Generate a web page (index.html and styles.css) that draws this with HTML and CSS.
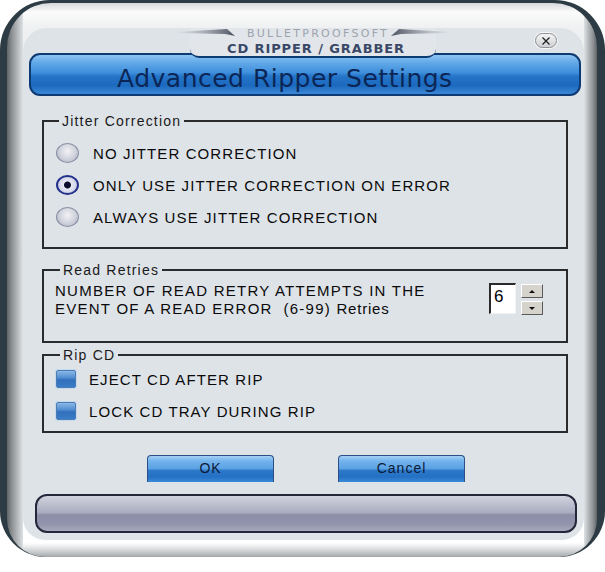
FILE: index.html
```html
<!DOCTYPE html>
<html>
<head>
<meta charset="utf-8">
<link rel="stylesheet" href="styles.css">
</head>
<body>
<div class="frame">
  <div class="chrome">
    <div class="panel">
      <div class="tab">
        <svg class="bevel" width="276" height="14" viewBox="0 0 276 14">
          <defs>
            <linearGradient id="wl" x1="0" x2="1" y1="0" y2="0">
              <stop offset="0" stop-color="#8a909c" stop-opacity="0"/>
              <stop offset="1" stop-color="#4a505e"/>
            </linearGradient>
            <linearGradient id="wr" x1="1" x2="0" y1="0" y2="0">
              <stop offset="0" stop-color="#8a909c" stop-opacity="0"/>
              <stop offset="1" stop-color="#4a505e"/>
            </linearGradient>
          </defs>
          <polygon points="0,6 52,3 60,10 50,8 0,7" fill="url(#wl)"/>
          <polygon points="276,6 224,3 216,10 226,8 276,7" fill="url(#wr)"/>
        </svg>
        <div class="brand">BULLETPROOFSOFT</div>
        <div class="product">CD RIPPER / GRABBER</div>
      </div>
      <div class="close">
        <svg width="10" height="10" viewBox="0 0 10 10"><path d="M1.5 1.5 L8.5 8.5 M8.5 1.5 L1.5 8.5" stroke="#222" stroke-width="1.3" fill="none"/></svg>
      </div>
      <div class="titlebar"><h1 class="title">Advanced Ripper Settings</h1></div>

      <fieldset class="group jitter">
        <legend class="legend">Jitter Correction</legend>
        <div class="row"><span class="radio"></span><span class="label">NO JITTER CORRECTION</span></div>
        <div class="row"><span class="radio on"></span><span class="label">ONLY USE JITTER CORRECTION ON ERROR</span></div>
        <div class="row"><span class="radio"></span><span class="label">ALWAYS USE JITTER CORRECTION</span></div>
      </fieldset>

      <fieldset class="group retries">
        <legend class="legend">Read Retries</legend>
        <div class="retry-row">
          <div class="retry-text label">NUMBER OF READ RETRY ATTEMPTS IN THE<br>EVENT OF A READ ERROR &nbsp;(6-99) <span class="mixed">Retries</span></div>
          <div class="spin">
            <div class="spin-input">6</div>
            <div class="spin-btns">
              <div class="spin-btn"><span class="tri up"></span></div>
              <div class="spin-btn"><span class="tri down"></span></div>
            </div>
          </div>
        </div>
      </fieldset>

      <fieldset class="group ripcd">
        <legend class="legend">Rip CD</legend>
        <div class="row chk"><span class="check"></span><span class="label">EJECT CD AFTER RIP</span></div>
        <div class="row chk"><span class="check"></span><span class="label">LOCK CD TRAY DURING RIP</span></div>
      </fieldset>

      <div class="actions">
        <div class="btn">OK</div>
        <div class="btn">Cancel</div>
      </div>

      <div class="statusbar"></div>
    </div>
  </div>
</div>
</body>
</html>
```

FILE: styles.css
```css
html, body {
  margin: 0;
  padding: 0;
  background: #ffffff;
}
body {
  width: 605px;
  height: 572px;
  overflow: hidden;
  font-family: "Liberation Sans", Arial, sans-serif;
  color: #111;
}
.frame {
  width: 605px;
  height: 557px;
  box-sizing: border-box;
  padding: 3px 8px 0 7px;
  background: #2d3c44;
  border-radius: 50px 50px 46px 46px;
}
.chrome {
  height: 100%;
  box-sizing: border-box;
  padding-top: 25px;
  border-radius: 44px 44px 38px 38px;
  background:
    linear-gradient(to right, #5f6467 0px, #8e9294 5px, #b9bcbe 11px, #dfe2e4 16px, transparent 16px, transparent calc(100% - 13px), #dfe2e4 calc(100% - 13px), #b9bcbe calc(100% - 9px), #8e9294 calc(100% - 4px), #5f6467 100%),
    linear-gradient(to bottom, #d5d8da 0, #fbfbfb 9px, #eef0f1 25px, #e6e9eb 50%, #ffffff calc(100% - 14px), #cfd2d4 calc(100% - 6px), #a3a7aa 100%);
}
.panel {
  position: relative;
  margin: 0 13px 0 16px;
  background: #dee3e8;
  border-radius: 24px 24px 22px 22px;
  display: flex;
  flex-direction: column;
}

/* header tab */
.tab {
  position: absolute;
  left: 167px;
  top: 0;
  width: 246px;
  height: 28px;
  background: #e2e6ea;
  border-bottom: 2px solid #0c3a74;
  border-radius: 0 0 9px 9px;
  text-align: center;
  z-index: 2;
}
.bevel {
  position: absolute;
  left: -15px;
  top: -2px;
}
.brand {
  position: relative;
  font-family: "DejaVu Sans", Verdana, sans-serif;
  font-size: 11px;
  line-height: 11px;
  letter-spacing: 2.3px;
  color: #9da3ad;
  padding-left: 10px;
}
.product {
  position: relative;
  font-family: "DejaVu Sans", Verdana, sans-serif;
  font-weight: bold;
  font-size: 13px;
  line-height: 19px;
  letter-spacing: 0.9px;
  color: #3a4868;
  padding-left: 6px;
}
.close {
  position: absolute;
  left: 512px;
  top: 5px;
  width: 22px;
  height: 15px;
  box-sizing: border-box;
  border: 1px solid #8d9094;
  border-radius: 8px;
  background: linear-gradient(#f4f4f4, #cfd1d4);
  box-shadow: 0 0 0 1px #f6f7f8;
  display: flex;
  align-items: center;
  justify-content: center;
}

/* blue title bar */
.titlebar {
  margin: 25px 3px 0 6px;
  height: 43px;
  box-sizing: border-box;
  border: 2px solid #0d3a72;
  border-radius: 11px;
  background: linear-gradient(to bottom, #8cc4f2 0%, #5ea6e6 22%, #3f8fdc 45%, #2474c8 55%, #1c6abf 78%, #3b88d6 100%);
  padding: 10px 0 0 86px;
}
.title {
  margin: 0;
  font-family: "DejaVu Sans", Verdana, sans-serif;
  font-weight: normal;
  font-size: 25px;
  line-height: 28px;
  letter-spacing: 0.5px;
  color: #0b2656;
  white-space: nowrap;
}

/* group boxes */
.group {
  margin: 0 16px 0 19px;
  border: 2px solid #2a2b2d;
  min-width: 0;
}
.legend {
  font-size: 14px;
  line-height: 16px;
  letter-spacing: 1.2px;
  padding: 0 3px;
  color: #1a1a1a;
}
.jitter {
  margin-top: 17px;
  padding: 8px 14px 14px 13px;
}
.jitter .legend { margin-left: 2px; }
.retries {
  margin-top: 13px;
  padding: 4px 23px 23px 11px;
}
.retries .legend { margin-left: 5px; }
.ripcd {
  margin-top: 4px;
  padding: 0 14px 4px 12px;
}
.ripcd .legend { margin-left: 4px; }

.label {
  font-size: 15px;
  letter-spacing: 1.1px;
  color: #0a0a0a;
  white-space: nowrap;
}
.retry-text { letter-spacing: 1.25px; }
.mixed { letter-spacing: 0.8px; }
.row {
  display: flex;
  align-items: center;
  height: 32px;
  gap: 12px;
}
.row.chk { gap: 13px; }

.radio {
  width: 23px;
  height: 20px;
  box-sizing: border-box;
  border-radius: 50%;
  border: 1px solid #8a8ea6;
  background: radial-gradient(ellipse at 50% 40%, #f2f2f6 0%, #d6d8e0 45%, #a9adbe 100%);
  flex: none;
  margin-left: -1px;
  margin-right: 2px;
}
.radio.on {
  border: 2px solid #23308a;
  background: radial-gradient(circle at 50% 50%, #0b0b2e 0, #0b0b2e 3px, #e6e8f4 4px, #cfd2e6 70%, #9ea4c8 100%);
}
.check {
  width: 20px;
  height: 18px;
  box-sizing: border-box;
  border: 1px solid #4a7cb6;
  border-radius: 2px;
  background: linear-gradient(to bottom, #8ab8e6 0%, #5590d2 40%, #3170bc 55%, #3a7cc6 100%);
  box-shadow: 0 0 0 1px #c5d8ec;
  flex: none;
}

.retry-row {
  display: flex;
  align-items: flex-start;
  justify-content: space-between;
}
.retry-text { line-height: 18px; }
.spin {
  display: flex;
  gap: 5px;
  margin-top: 1px;
}
.spin-input {
  width: 27px;
  height: 31px;
  box-sizing: border-box;
  background: #fff;
  border-style: solid;
  border-width: 2px 1px 1px 2px;
  border-color: #2a2a2a #f2f2f2 #f2f2f2 #2a2a2a;
  font-size: 17px;
  line-height: 24px;
  padding-left: 3px;
  color: #000;
}
.spin-btns {
  display: flex;
  flex-direction: column;
  gap: 3px;
  padding-top: 1px;
}
.spin-btn {
  width: 22px;
  height: 14px;
  box-sizing: border-box;
  background: #d6d3cc;
  border: 1px solid;
  border-color: #ffffff #5a5a5a #5a5a5a #ffffff;
  display: flex;
  align-items: center;
  justify-content: center;
}
.tri {
  width: 0;
  height: 0;
  border-left: 3px solid transparent;
  border-right: 3px solid transparent;
}
.tri.up { border-bottom: 3px solid #111; }
.tri.down { border-top: 3px solid #111; }

/* buttons */
.actions {
  display: flex;
  justify-content: center;
  gap: 64px;
  margin-top: 22px;
  padding-left: 5px;
}
.btn {
  width: 127px;
  height: 27px;
  box-sizing: border-box;
  border: 1px solid #2c4f86;
  border-bottom: none;
  border-radius: 4px 4px 0 0;
  background: linear-gradient(to bottom, #a4d0f4 0%, #72b2ec 20%, #5ba2e4 48%, #2d78c8 56%, #2370c4 80%, #3c8ad8 100%);
  text-align: center;
  font-size: 14px;
  line-height: 25px;
  letter-spacing: 1px;
  color: #0c1a38;
}

/* bottom status bar */
.statusbar {
  margin: 12px 7px 7px 12px;
  height: 39px;
  box-sizing: border-box;
  border: 2px solid #25263a;
  border-radius: 12px;
  background: linear-gradient(to bottom, #d3d4de 0%, #bcbece 25%, #a9abbf 48%, #8c8ea8 54%, #9294ac 80%, #a6a8bc 100%);
}
```
